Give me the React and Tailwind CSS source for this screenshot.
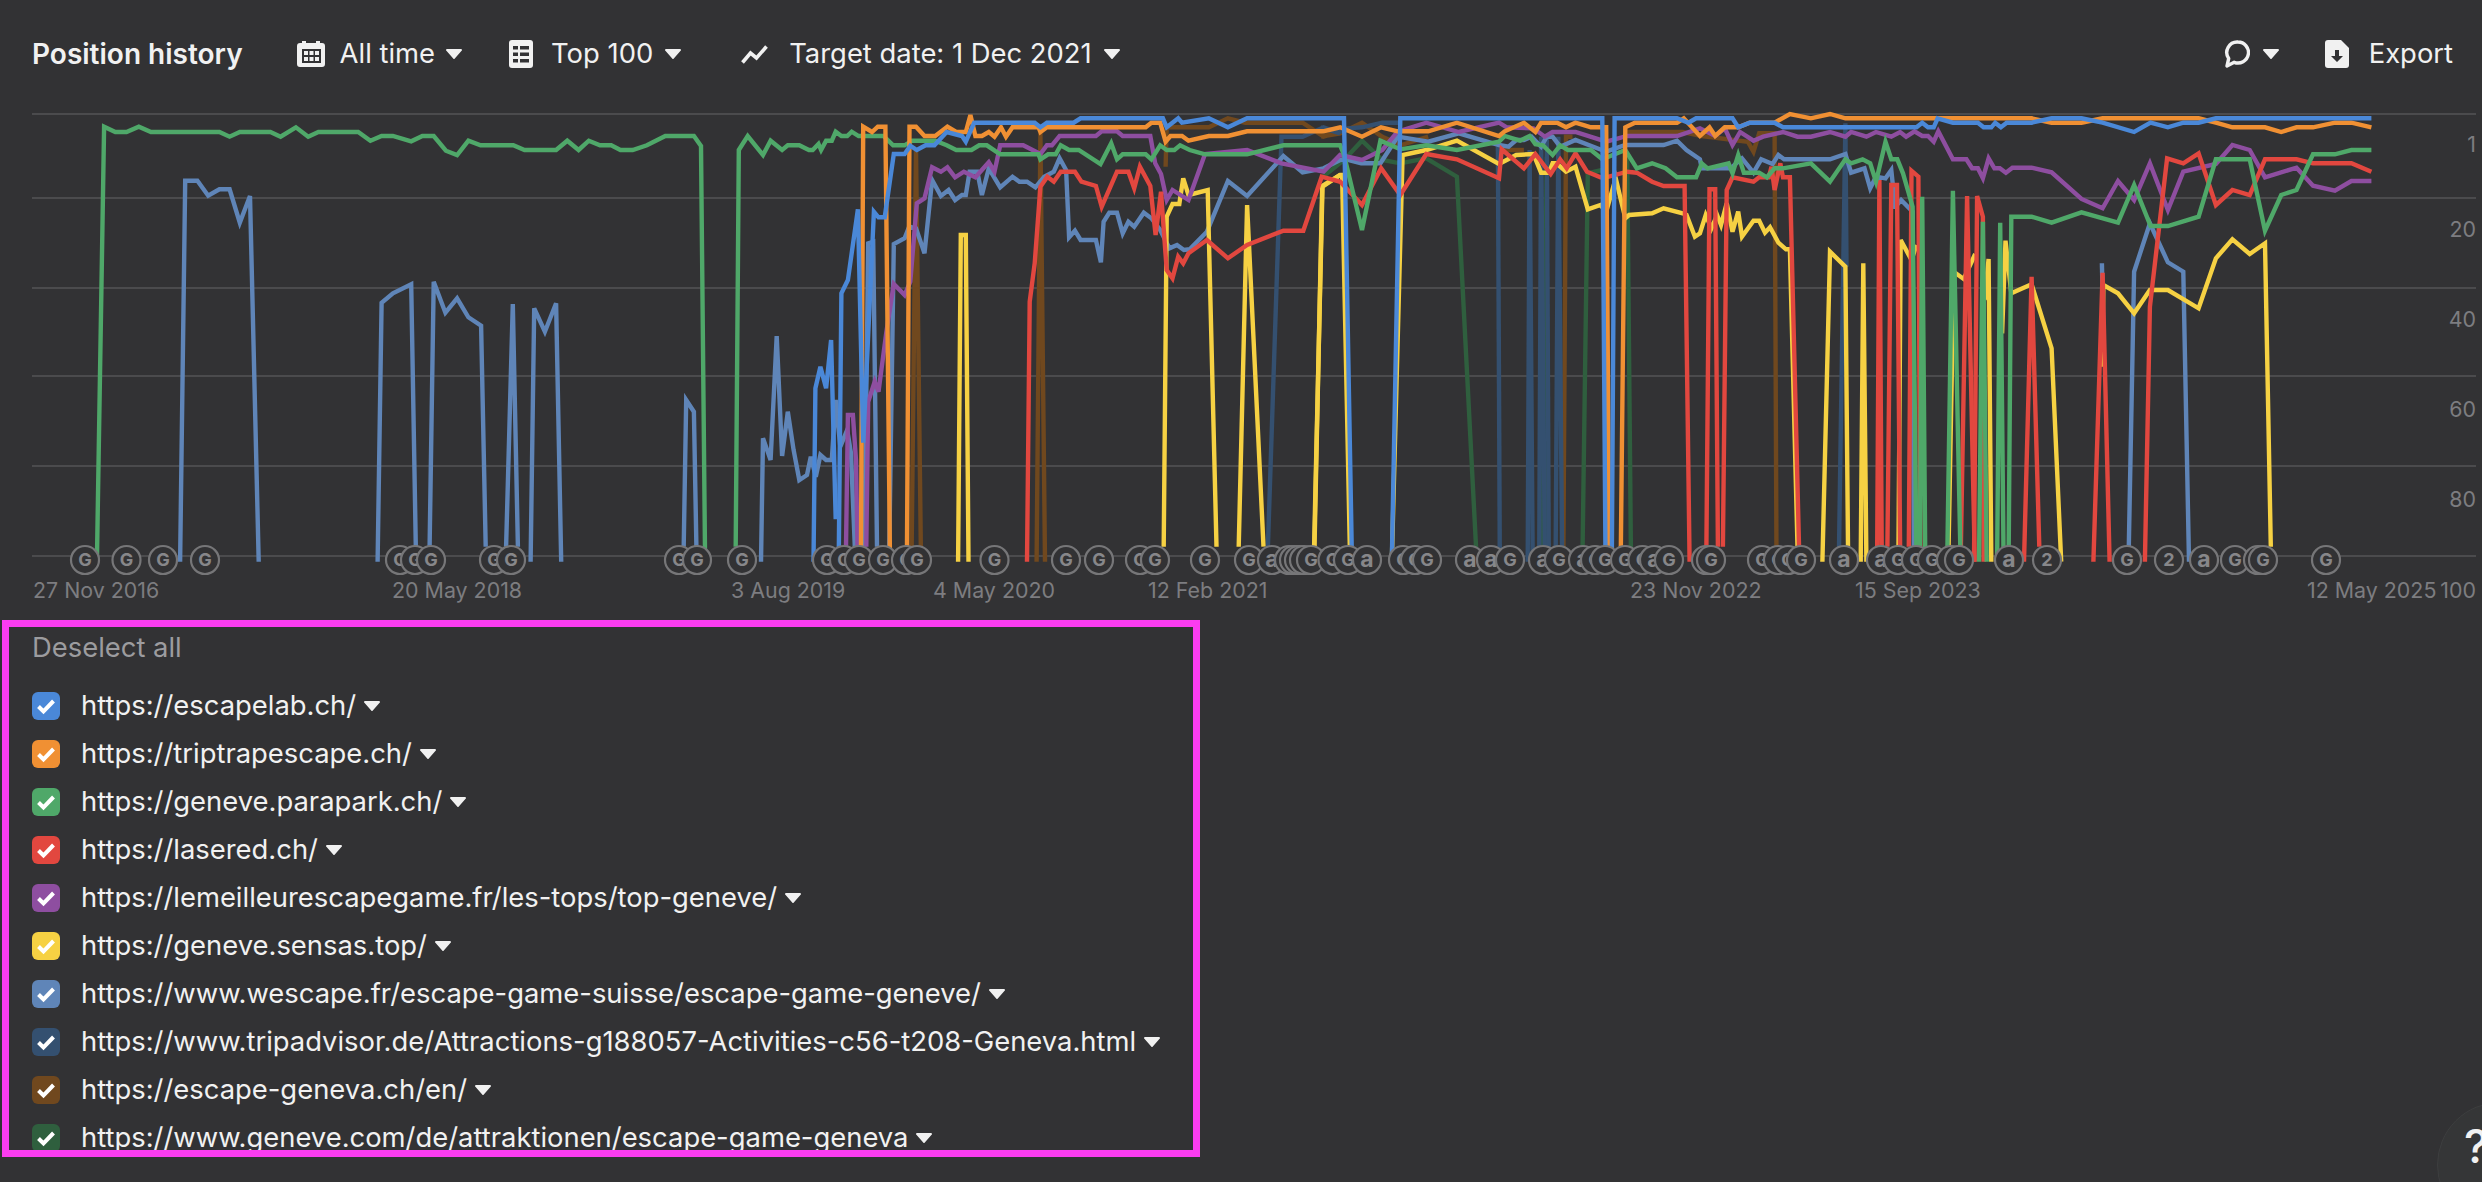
import React from "react";

const FONT = "font-['Inter','Liberation_Sans',sans-serif]";

// trace scales used when reading the chart off the reference
const A = [1.96, 0];
const B = [2.613, 740];
const C = [2.613, 1300];
const D = [2.605, 1880];

function line(...chunks) {
  let out = [];
  for (let i = 0; i < chunks.length; i += 2) {
    const [k, off] = chunks[i];
    const pairs = chunks[i + 1].trim().split(/\s+/);
    for (const p of pairs) {
      const [x, y] = p.split(",").map(Number);
      out.push(`${(off + x / k).toFixed(1)},${(100 + y / 3).toFixed(1)}`);
    }
  }
  return out.join(" ");
}

const SERIES = [
  {
    color: "#2f5f3e",
    lines: [
      line(C, "60,230 115,180 162,122 215,180 262,190 330,175 410,230 462,1385"),
      line(C, "632,1385 645,170 640,1385"),
      line(C, "738,1385 752,220 790,210"),
      line(C, "855,165 865,1385"),
    ],
  },
  {
    color: "#70481e",
    lines: [
      line(B, "448,1385 460,150 473,1385"),
      line(B, "775,1385 785,100 797,1385"),
      line(B, "1112,200 1115,82 1225,82 1275,55 1320,68 1470,68 1525,110 1568,95", C, "55,110 105,100 162,68 215,110 265,135 335,110"),
      line(C, "520,150 585,150"),
      line(C, "688,1385 695,110 712,110"),
      line(C, "850,96 1000,96 1050,108 1170,125 1185,155 1200,100 1240,100 1245,1385"),
    ],
  },
  {
    color: "#345070",
    lines: [
      line(B, "1378,1385 1415,110 1470,110 1525,82 1568,100", C, "55,82 105,95 125,85 162,82 215,68 262,68"),
      line(C, "517,140 522,1385"),
      line(C, "595,1385 600,150 608,1385"),
      line(C, "625,1385 630,110 640,1385"),
      line(C, "650,1385 645,110"),
      line(C, "668,1385 675,110 685,1385"),
      line(C, "1408,1385 1425,70 1428,500"),
    ],
  },
  {
    color: "#5f85b8",
    lines: [
      line(A, "353,1385 363,242 387,242 408,287 430,268 450,268 470,368 490,288 507,1385"),
      line(A, "740,1385 748,608 770,580 806,553 815,1340"),
      line(A, "842,1340 850,545 873,638 896,595 918,652 943,677 952,1340"),
      line(A, "992,1340 1005,612 1015,1340"),
      line(A, "1040,1385 1047,625 1068,695 1090,610 1100,1385"),
      line(A, "1340,1340 1345,900 1360,935 1365,1340"),
      line(B, "55,1385 60,1015 80,1080 96,708 110,1068 125,935 140,1050 155,1140 175,1125 185,1070 198,1130 210,1065 225,1080 240,1080 250,900 262,1040 280,990 290,1060 300,1340"),
      line(B, "325,1340 335,430 348,425 358,1340"),
      line(B, "390,1340 402,432 430,415 442,380 460,385 482,460 502,240 525,288 545,270 562,300 580,285 590,285 600,215 620,215 632,285 650,205 680,262 712,230 730,245 750,245 772,262 795,230 820,215 835,175 852,210 860,412 875,392 890,420 930,420 943,487 950,365 965,338 985,338 1000,400 1015,365 1030,380 1055,338 1075,355 1098,390 1122,445 1142,435 1160,450 1175,448 1220,395 1275,243 1325,288 1420,168 1470,217 1525,205 1568,180",
        C, "120,178 160,190 210,190 255,110 335,125 415,100 520,135 545,140 565,120 585,120 605,110 630,140 645,110 660,110 680,140 720,120 800,155 850,135 950,135 985,122 1010,150 1045,178 1050,205 1125,205 1155,175 1185,218 1205,178 1235,192 1250,165 1265,178 1385,178 1425,162 1440,218 1475,205 1490,265 1505,230 1530,235 1545,210 1555,320",
        D, "40,320 55,300 85,335 88,1340"),
      line(D, "578,490 582,700"),
      line(D, "648,1340 662,515 703,370 750,487 790,515 805,1385"),
    ],
  },
  {
    color: "#f6d143",
    lines: [
      line(B, "570,1385 577,405 590,405 597,1385"),
      line(B, "1107,1340 1115,350 1130,312 1148,312 1158,235 1172,285 1222,270 1245,1340"),
      line(B, "1303,1340 1325,315 1368,1340"),
      line(B, "1500,1340 1522,260 1568,225", C, "105,225 110,225 130,1340"),
      line(C, "38,1340 58,258 105,225"),
      line(C, "240,1385 268,165 330,150 410,122 520,192 565,165 610,162 630,218 650,218 660,190 670,190 695,215 720,200 752,328 785,315 800,335 825,235 850,355 860,345 920,340 950,325 1000,340 1010,345 1032,410 1045,400 1060,345 1075,385 1090,345 1100,375 1115,310 1130,395 1145,335 1155,410 1185,362 1200,362 1215,398 1228,382 1250,428 1270,448 1280,448 1300,1340"),
      line(C, "1365,1385 1385,455 1425,500 1432,1340"),
      line(C, "1465,1385 1472,490 1480,1385"),
      line(D, "48,1385 54,420 82,480 95,435"),
      line(D, "178,1385 192,515 218,537 248,462"),
      line(D, "272,600 283,477 290,1385"),
      line(D, "318,700 327,422 342,580 395,553 447,745 472,1385"),
      line(D, "578,800 582,555 620,580 662,640 703,570 750,570 830,625 875,475 918,418 963,462 1003,430 1018,1340"),
    ],
  },
  {
    color: "#8e4ea0",
    lines: [
      line(B, "277,1340 282,945 295,945 303,1080 307,1340"),
      line(B, "330,1340 335,905 352,845 362,875 382,700 402,552 430,585 445,545 462,310 482,295 502,202 525,215 542,202 562,232 585,215 615,232 650,187 665,215 680,136 740,136 785,162 802,136 815,136 835,108 930,108 945,94 985,94 1000,108 1072,108 1085,190 1100,222 1115,300 1130,270 1172,300 1215,162 1325,150 1415,190 1525,215 1568,165",
        C, "162,180 215,150 255,95 330,68 415,96 520,68 540,82 610,85 640,110 660,96 720,96 800,125 855,108 985,108 1045,85 1085,108 1110,85 1130,135 1150,96 1185,122 1210,110 1262,96 1300,110 1335,110 1385,96 1425,110 1440,96 1480,110 1505,96 1545,110 1568,96",
        D, "68,110 90,94 110,108 125,108 140,125 152,94 190,178 225,178 240,205 255,205 268,235 283,175 298,205 312,205 328,218 345,203 395,203 447,217 525,297 580,325 620,243 662,300 703,190 750,330 790,215 875,192 918,135 963,150 1003,232 1085,203 1128,257 1185,272 1228,243 1280,243"),
    ],
  },
  {
    color: "#e2473f",
    lines: [
      line(B, "750,1385 757,605 770,490 785,260 803,230 820,245 838,215 875,215 892,245 930,258 945,320 985,215 1015,215 1030,265 1045,200 1072,258 1086,405 1100,275 1115,510 1130,535 1145,470 1158,490 1172,460 1220,420 1275,475 1325,435 1420,392 1472,392 1520,230 1568,245",
        C, "105,245 162,315 212,205 262,285 330,162 410,178 520,235 527,148 585,205 615,162 655,222 680,178 697,205 720,160 750,215 785,232 800,232 855,215 880,218 920,245 950,258 1005,258 1018,1385"),
      line(C, "1062,1340 1070,268 1085,268 1092,1340"),
      line(C, "1105,1340 1115,270 1130,232 1185,245 1200,232 1225,232 1232,200 1240,270 1255,190 1262,232 1280,232 1305,1385"),
      line(C, "1508,1385 1514,240 1520,1340"),
      line(C, "1535,1340 1545,255 1560,255 1568,1340"),
      line(D, "75,1340 82,212 100,230 105,1340"),
      line(D, "210,1385 227,288 247,1385"),
      line(D, "245,1385 253,288 268,350 270,1385"),
      line(D, "375,1385 395,530 415,1340"),
      line(D, "556,1385 580,518 598,1385"),
      line(D, "690,1385 703,620 748,175 790,190 830,160 875,315 918,270 963,285 1003,178 1085,178 1128,190 1228,190 1280,215"),
    ],
  },
  {
    color: "#4fa869",
    lines: [
      line(A, "190,1385 204,80 226,96 248,96 272,80 296,96 430,96 450,110 470,96 530,96 550,110 580,82 604,110 624,96 702,96 726,122 748,108 770,108 806,124 828,108 850,108 874,152 896,165 918,122 942,136 1006,136 1028,150 1090,150 1112,122 1134,150 1154,122 1176,136 1198,136 1216,150 1240,150 1268,136 1304,108 1360,108 1374,138 1382,1385"),
      line(A, "1442,1340 1448,150",
        B, "20,108 60,165 80,122 110,150 125,136 155,136 180,150 190,150 205,132 212,150 225,122 240,122 250,95 265,108 280,108 292,95 310,108 375,108 400,136 430,136 450,122 510,122 540,136 565,150 605,150 625,136 645,136 680,163 780,163 785,178 805,163 825,163 838,136 860,150 885,150 942,192 970,130 985,178 1000,163 1060,163 1075,178 1098,136 1115,150 1135,150 1150,136 1175,150 1215,163 1325,163 1420,136 1568,136",
        C, "115,165 162,390 210,122 262,148 330,136 410,150 520,125 535,108 575,122 600,108 615,133 635,136 660,165 680,136 700,150 760,150 790,178 850,150 880,205 920,190 955,205 985,232 1035,232 1050,190 1065,205 1120,190 1130,220 1145,165 1160,218 1200,218 1220,232 1240,205 1262,205 1335,190 1385,245 1425,178 1440,190 1470,178 1490,190 1505,245 1530,125 1545,178",
        D, "45,178 60,220 85,320 95,1385"),
      line(D, "104,1385 110,290 118,1385"),
      line(D, "175,1385 190,272 210,1385"),
      line(D, "258,1385 268,365 278,1385"),
      line(D, "305,1385 313,368 322,1385"),
      line(D, "335,1385 342,350 395,350 447,368 525,337 620,368 662,255 705,378 750,378 830,350 875,178 963,178 1003,392 1045,285 1085,270 1128,163 1185,163 1228,150 1280,150"),
    ],
  },
  {
    color: "#f09033",
    lines: [
      line(B, "316,1385 322,80 345,96 360,80 380,80 392,1385"),
      line(B, "436,1385 443,80 460,80 482,108 510,108 542,80 565,96 590,96 602,45 615,108 632,108 650,96 665,110 682,82 695,110 712,82 780,82 785,96 802,82 1060,82 1075,68 1098,68 1112,125 1125,108 1155,108 1172,122 1225,108 1275,108 1325,94 1525,94 1568,82",
        C, "60,94 105,82 162,110 212,82 255,94 335,94 410,68 520,108 535,94 585,68 615,96 630,68 672,68 695,82 720,68 760,82 800,82 808,1385"),
      line(C, "838,1385 850,82 875,68 985,68 1003,55 1045,108 1070,82 1085,108 1110,82 1145,82 1175,68 1240,68 1280,42 1335,55 1385,42 1425,55 1568,55",
        D, "395,55 447,68 525,68 580,55 830,55 875,68 918,82 1003,82 1045,96 1085,82 1128,82 1185,68 1228,68 1280,82"),
    ],
  },
  {
    color: "#4a88d8",
    lines: [
      line(B, "192,1385 197,865 210,800 225,865 238,720 250,1258"),
      line(B, "258,1385 265,580 282,540 308,328 322,1028 350,335 362,352 378,352 402,162 430,162 445,137 462,150 485,136 508,136 540,96 580,108 590,125 612,68 770,68 785,82 802,68 872,68 890,55 1105,55 1115,82 1145,55 1155,68 1225,55 1275,82 1325,55 1568,55",
        C, "115,55 135,1340"),
      line(C, "240,1385 262,55 790,55 798,1340"),
      line(C, "815,1345 822,55 985,55 1015,68 1035,55 1130,55 1145,82 1175,68 1240,68 1262,82 1568,82",
        D, "95,82 110,68 125,82 140,82 150,55 190,68 255,68 270,82 290,82 300,68 315,82 330,68 395,68 447,55 525,55 580,68 662,96 705,68 750,82 790,68 830,68 875,55 1280,55"),
    ],
  },
];

const GRID_Y = [114, 198, 288, 376, 466, 556];
const Y_LABELS = [["1", 152], ["20", 237], ["40", 327], ["60", 417], ["80", 507], ["100", 598]];
const X_LABELS = [
  ["27 Nov 2016", 33], ["20 May 2018", 392], ["3 Aug 2019", 731], ["4 May 2020", 933], ["12 Feb 2021", 1148],
  ["23 Nov 2022", 1630], ["15 Sep 2023", 1855], ["12 May 2025", 2307],
];
const MARKERS = [
  [85, "G"], [126.5, "G"], [163, "G"], [205, "G"], [400, "G"], [415, "G"], [431, "G"], [494, "G"], [511, "G"], [679, "G"], [697, "G"], [742, "G"],
  [827, "G"], [844, "G"], [859, "G"], [883, "G"], [906, "G"], [917, "G"], [994.5, "G"], [1066, "G"], [1099, "G"], [1140, "G"], [1155, "G"], [1205, "G"], [1249, "G"], [1272, "a"],
  [1289, "G"], [1294, "G"], [1299, "G"], [1304, "G"], [1311, "G"], [1332.5, "G"], [1348, "G"], [1367, "a"], [1403, "G"], [1415, "G"], [1427, "G"],
  [1470, "a"], [1491, "a"], [1510, "G"], [1543, "a"], [1559, "G"], [1583, "a"], [1595, "G"], [1605, "G"], [1625, "G"], [1642.5, "G"], [1654, "a"], [1669, "G"],
  [1706, "G"], [1711, "G"], [1762, "G"], [1778, "G"], [1788, "G"], [1801, "G"], [1844, "a"], [1881, "a"], [1898, "G"], [1916, "G"], [1932, "G"], [1951, "G"], [1959, "G"],
  [2009, "a"], [2047, "2"], [2127, "G"], [2169, "2"], [2204, "a"], [2235, "G"], [2258, "G"], [2263, "G"], [2326, "G"],
];

const URLS = [
  ["https://escapelab.ch/", "bg-[#4a88d8]"],
  ["https://triptrapescape.ch/", "bg-[#f09033]"],
  ["https://geneve.parapark.ch/", "bg-[#4fa869]"],
  ["https://lasered.ch/", "bg-[#e2473f]"],
  ["https://lemeilleurescapegame.fr/les-tops/top-geneve/", "bg-[#8e4ea0]"],
  ["https://geneve.sensas.top/", "bg-[#f6d143]"],
  ["https://www.wescape.fr/escape-game-suisse/escape-game-geneve/", "bg-[#5f85b8]"],
  ["https://www.tripadvisor.de/Attractions-g188057-Activities-c56-t208-Geneva.html", "bg-[#345070]"],
  ["https://escape-geneva.ch/en/", "bg-[#70481e]"],
  ["https://www.geneve.com/de/attraktionen/escape-game-geneva", "bg-[#2f5f3e]"],
];

function Caret({ className = "" }) {
  return (
    <svg viewBox="0 0 16 10" className={`h-[10px] w-[16px] shrink-0 ${className}`}>
      <path d="M1 0h14a1 1 0 0 1 .8 1.600L8.800 9.600a1 1 0 0 1-1.600 0L.2 1.600A1 1 0 0 1 1 0z" fill="#f1f1f1" />
    </svg>
  );
}

function CalendarIcon() {
  return (
    <svg viewBox="0 0 28 26" className="h-[26px] w-[28px]" fill="#f1f1f1">
      <path fillRule="evenodd" d="M5 0h4v2h10V0h4v2h2a3 3 0 0 1 3 3v18a3 3 0 0 1-3 3H3a3 3 0 0 1-3-3V5a3 3 0 0 1 3-3h2zM5 8v14h19V8z" />
      <path d="M7 10h4v4H7zM12.500 10h4v4h-4zM18 10h4v4h-4zM7 16h4v4H7zM12.500 16h4v4h-4zM18 16h4v4h-4z" />
    </svg>
  );
}

function ListIcon() {
  return (
    <svg viewBox="0 0 24 28" className="h-[28px] w-[24px]">
      <rect width="24" height="28" rx="3" fill="#f1f1f1" />
      <path d="M4 6h5v3.500H4zM11 6h9v3.500h-9zM4 12.500h5V16H4zM11 12.500h9V16h-9zM4 19h5v3.500H4zM11 19h9v3.500h-9z" fill="#323234" />
    </svg>
  );
}

function TrendIcon() {
  return (
    <svg viewBox="0 0 27 19" className="h-[19px] w-[27px]" fill="none" stroke="#f1f1f1" strokeWidth="3.6">
      <path d="M1.500 17.500 9.500 8l6 5L25.500 1.500" />
    </svg>
  );
}

function ChatIcon() {
  return (
    <svg viewBox="0 0 26 28" className="h-[28px] w-[26px]" fill="none" stroke="#f1f1f1" strokeWidth="3.4">
      <path d="M14 2a10.500 10.500 0 1 1-3.800 20.300L3 26l1.700-7.500A10.500 10.500 0 0 1 14 2z" strokeLinejoin="round" />
    </svg>
  );
}

function ExportIcon() {
  return (
    <svg viewBox="0 0 24 28" className="h-[28px] w-[24px]">
      <path d="M3 0h13l8 8v17a3 3 0 0 1-3 3H3a3 3 0 0 1-3-3V3a3 3 0 0 1 3-3z" fill="#f1f1f1" />
      <path d="M10 10h4v6h4l-6 6-6-6h4z" fill="#323234" />
    </svg>
  );
}

function Chart() {
  return (
    <svg viewBox="0 110 2482 500" className={`block h-[500px] w-[2482px] ${FONT}`}>
      {GRID_Y.map((y) => (
        <line key={y} x1="32" x2="2476" y1={y} y2={y} stroke="#4b4b4d" strokeWidth="2" />
      ))}
      {SERIES.map((s) =>
        s.lines.map((pts, i) => (
          <polyline key={`${s.color}-${i}`} points={pts} fill="none" stroke={s.color} strokeWidth="4.400" />
        ))
      )}
      {MARKERS.map(([x, label], i) => (
        <g key={i}>
          <circle cx={x} cy="560" r="14" fill="#323234" stroke="#767678" strokeWidth="2.2" />
          <text
            x={x}
            y={label === "a" ? 566.5 : 566}
            textAnchor="middle"
            fontSize={label === "a" ? 23 : 18}
            fontWeight="700"
            fill="#87878a"
          >
            {label}
          </text>
        </g>
      ))}
      {X_LABELS.map(([label, x]) => (
        <text key={label} x={x} y="598" fontSize="21.400" fill="#7d7d80">
          {label}
        </text>
      ))}
      {Y_LABELS.map(([label, y]) => (
        <text key={label} x="2476" y={y} textAnchor="end" fontSize="21.400" fill="#7d7d80">
          {label}
        </text>
      ))}
    </svg>
  );
}

export default function App() {
  return (
    <div className={`relative h-[1182px] w-[2482px] overflow-hidden bg-[#323234] text-[27.400px] leading-none text-[#f1f1f1] ${FONT}`}>
      <header className="flex h-[110px] items-center justify-between pb-[2px] pl-[32px] pr-[29px]">
        <div className="flex items-center">
          <h1 className="mr-[54px] text-[28px] font-semibold">Position history</h1>
          <div className="mr-[47px] flex items-center">
            <CalendarIcon />
            <span className="ml-[15px] mr-[11px]">All time</span>
            <Caret />
          </div>
          <div className="mr-[60px] flex items-center">
            <ListIcon />
            <span className="ml-[18px] mr-[12px]">Top 100</span>
            <Caret />
          </div>
          <div className="flex items-center">
            <TrendIcon />
            <span className="ml-[21px] mr-[12px]">Target date: 1 Dec 2021</span>
            <Caret />
          </div>
        </div>
        <div className="flex items-center">
          <ChatIcon />
          <Caret className="ml-[13px] mr-[46px]" />
          <ExportIcon />
          <span className="ml-[20px]">Export</span>
        </div>
      </header>

      <Chart />

      <section className="ml-[2px] mt-[10px] h-[537px] w-[1198px] overflow-hidden border-[7px] border-[#fb3cf0] pl-[23px]">
        <div className="flex h-[42px] items-center text-[#9c9c9f]">Deselect all</div>
        <ul className="mt-[23px] flex flex-col gap-[20px]">
          {URLS.map(([url, color]) => (
            <li key={url} className="flex h-[28px] items-center">
              <span className={`flex h-[28px] w-[28px] shrink-0 items-center justify-center rounded-[6px] ${color}`}>
                <svg viewBox="0 0 20 20" className="h-[20px] w-[20px]" fill="none" stroke="#fff" strokeWidth="4">
                  <path d="M2.500 10.500 7.500 15.500 17.500 5" />
                </svg>
              </span>
              <span className="ml-[21px] mr-[8px] whitespace-nowrap">{url}</span>
              <Caret />
            </li>
          ))}
        </ul>
      </section>

      <div className="absolute left-[2437px] top-[1102px] h-[126px] w-[126px] rounded-full border border-[#3d3e3f] bg-[#353637] pl-[26px] pt-[20px] text-[46px] font-medium">
        ?
      </div>
    </div>
  );
}
